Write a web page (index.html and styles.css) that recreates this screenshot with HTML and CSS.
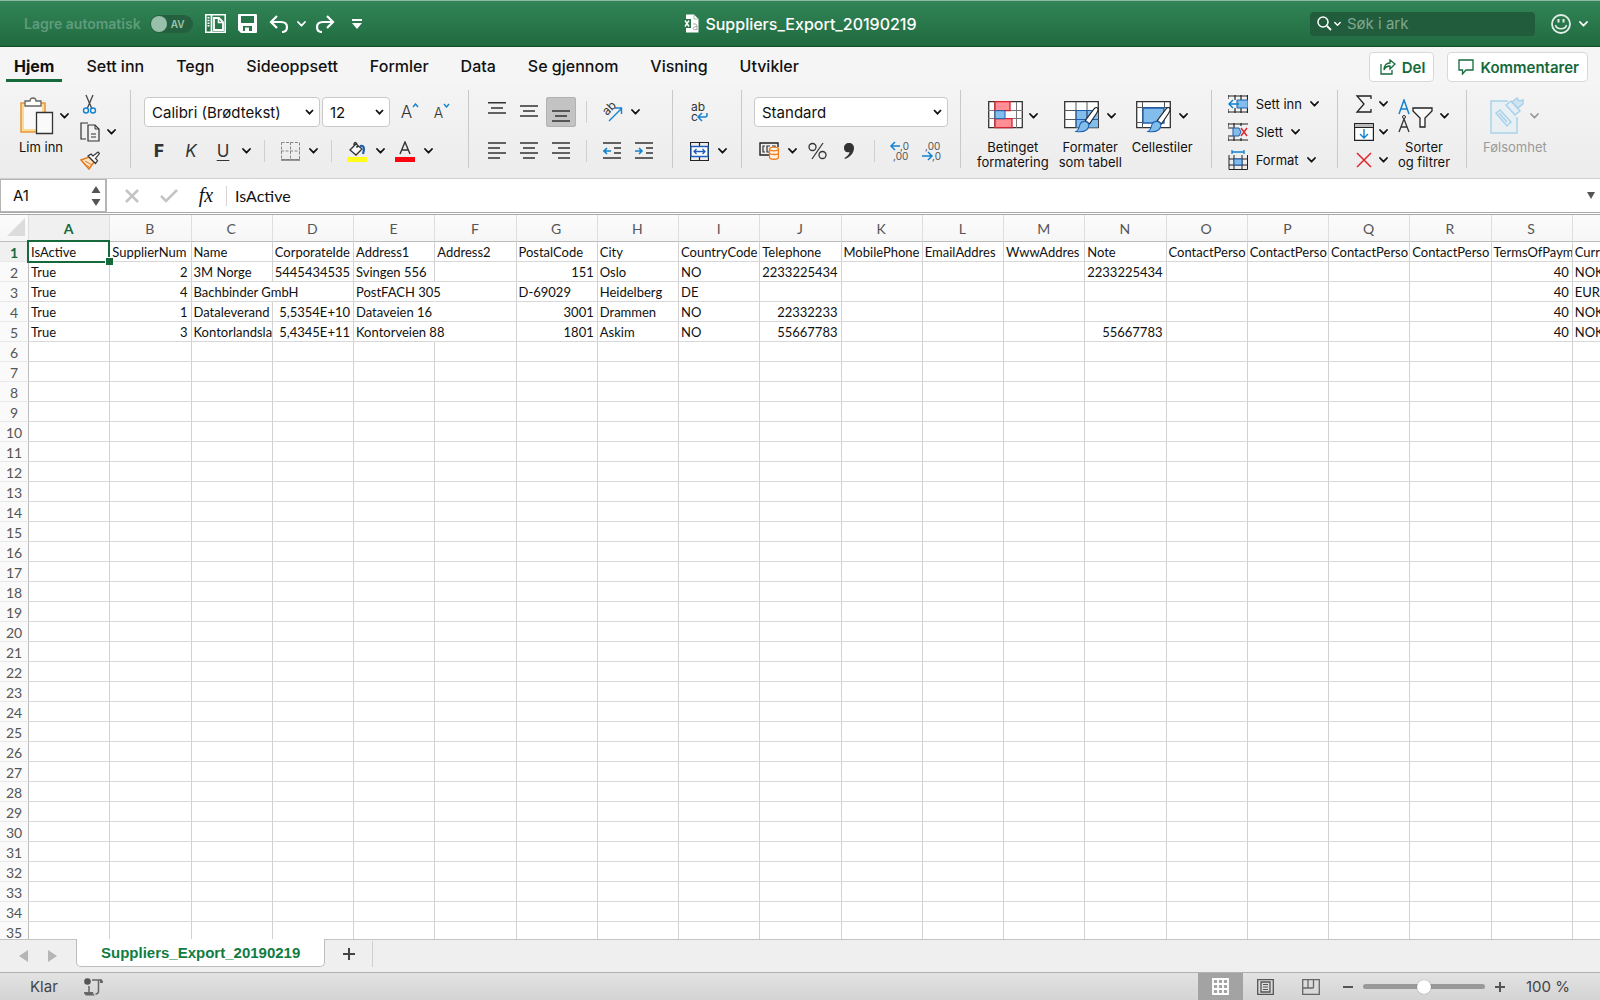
FILE: index.html
```html
<!DOCTYPE html>
<html lang="nb">
<head>
  <meta charset="UTF-8" />
  <meta name="viewport" content="width=device-width, initial-scale=1.0" />
  <title>Suppliers_Export_20190219</title>
  <link rel="stylesheet" href="styles.css">
</head>
<body>
  <!-- shared icons -->
  <svg class="defs" aria-hidden="true">
    <symbol id="chev" viewBox="0 0 9 6"><path d="M1 1l3.500 3.700L8 1" fill="none" stroke="currentColor" stroke-width="1.800" stroke-linecap="round" stroke-linejoin="round"/></symbol>
    <symbol id="brush" viewBox="0 0 28 32">
      <path d="M26 1c2 1 1 4-1 7l-8 12-5-4 9-12c2-3 4-4 5-3z" fill="#fff" stroke="#222" stroke-width="1.300"/>
      <path d="M11 17c3 0 6 3 5 6-1 5-7 7-15 6 4-2 3-5 5-9 1-2 3-3 5-3z" fill="#83bdec" stroke="#1d5fae" stroke-width="1.300"/>
    </symbol>
  </svg>

  <div class="app">
    <header class="titlebar">
      <div class="title-left">
        <label class="autosave" for="autosave">Lagre automatisk</label>
        <span class="toggle"><input type="checkbox" id="autosave" disabled><span>AV</span></span>
        <button class="tb-btn" aria-label="Ny fra mal">
          <svg width="21" height="19" viewBox="0 0 21 19"><path d="M.8 .8h19.400v17.400H.8z" fill="none" stroke="#fff" stroke-width="1.600"/><path d="M3.500 3v10" stroke="#fff" stroke-width="2" stroke-dasharray="1.500 1.200"/><path d="M6.500 1v17" stroke="#fff" stroke-width="1.800"/><path d="M9 4h5l4 4v8H9z" fill="none" stroke="#fff" stroke-width="1.800"/><path d="M13.500 4v4.500H18" fill="none" stroke="#fff" stroke-width="1.500"/></svg>
        </button>
        <button class="tb-btn" aria-label="Lagre">
          <svg width="19" height="19" viewBox="0 0 19 19"><path d="M1 0h17q1 0 1 1v17q0 1-1 1H3l-3-3V1q0-1 1-1z" fill="#fff"/><path d="M3 2h13v7H3zM5 12h9v5H5z" fill="#27754a"/><path d="M7 13.500h4V17H7z" fill="#fff"/></svg>
        </button>
        <button class="tb-btn undo" aria-label="Angre">
          <svg width="20" height="18" viewBox="0 0 20 18"><path d="M8 1L2 7l6 6M2 7h10c4 0 6 2 6 5s-2 5-5 5" class="wline"/></svg>
          <svg class="chev"><use href="#chev"/></svg>
        </button>
        <button class="tb-btn" aria-label="Gjør om">
          <svg width="20" height="18" viewBox="0 0 20 18"><path d="M12 1l6 6-6 6M18 7H8c-4 0-6 2-6 5s2 5 5 5" class="wline"/></svg>
        </button>
        <button class="tb-btn more" aria-label="Tilpass verktøylinje">
          <svg width="10" height="10" viewBox="0 0 10 10"><path d="M0 0h10v2H0zM0 4h10L5 10z" fill="#fff"/></svg>
        </button>
      </div>
      <h1 class="doc-title">
        <svg width="16" height="19" viewBox="0 0 16 19"><path d="M3 .5h8l4.500 4.500v13.500H3z" fill="#fff"/><path d="M11 .5V5h4.500" fill="none" stroke="#9dbfab"/><path d="M0 5h8v9H0z" fill="#27754a"/><path d="M2 6.500l4 6M6 6.500l-4 6" stroke="#fff" stroke-width="1.500"/><path d="M10 10q4-1 4 2v4M14 12.500q-4 0-4 2t4 1" fill="none" stroke="#aaa"/></svg>
        Suppliers_Export_20190219
      </h1>
      <div class="title-right">
        <div class="search">
          <svg width="15" height="15" viewBox="0 0 15 15"><circle cx="6" cy="6" r="5" fill="none" stroke="#fff" stroke-width="1.500"/><path d="M10 10l4 4" stroke="#fff" stroke-width="1.800"/></svg>
          <svg class="chev small"><use href="#chev"/></svg>
          <input type="text" placeholder="Søk i ark" aria-label="Søk i ark">
        </div>
        <button class="tb-btn smiley" aria-label="Tilbakemelding">
          <svg width="20" height="20" viewBox="0 0 20 20"><circle cx="10" cy="10" r="9" fill="none" stroke="#e2eee7" stroke-width="1.800"/><path d="M7.500 5v3.500M12.500 5v3.500" stroke="#e2eee7" stroke-width="2"/><path d="M4.500 11c1 5 10 5 11 0" fill="none" stroke="#e2eee7" stroke-width="1.500"/></svg>
          <svg class="chev"><use href="#chev"/></svg>
        </button>
      </div>
    </header>

    <nav class="tabs">
      <button class="tab active">Hjem</button>
      <button class="tab">Sett inn</button>
      <button class="tab">Tegn</button>
      <button class="tab">Sideoppsett</button>
      <button class="tab">Formler</button>
      <button class="tab">Data</button>
      <button class="tab">Se gjennom</button>
      <button class="tab">Visning</button>
      <button class="tab">Utvikler</button>
      <div class="tab-actions">
        <button class="outline-btn"><svg width="16" height="16" viewBox="0 0 16 16"><path d="M1 5v10h11v-4M10 1l5 4-5 5V7C7 7 5 8 4 11c0-4 2-7 6-7z" fill="none" stroke="#15693b" stroke-width="1.300"/></svg>Del</button>
        <button class="outline-btn"><svg width="16" height="16" viewBox="0 0 16 16"><path d="M1 1h14v10H8l-3.500 4v-4H1z" fill="none" stroke="#15693b" stroke-width="1.300"/></svg>Kommentarer</button>
      </div>
    </nav>

    <div class="ribbon">
      <section class="group clipboard">
        <button class="big">
          <span class="big-icon">
            <svg width="35" height="38" viewBox="0 0 35 38"><path d="M2 6h24v29H2z" fill="#fcdb93" stroke="#e8973c" stroke-width="1.500"/><path d="M5 9h18v23H5z" fill="#fafafa"/><path d="M6 9V4h5q0-3 3-3t3 3h5v5z" fill="#fff" stroke="#666" stroke-width="1.300"/><path d="M17.500 15.500h16v21h-16z" fill="#fafafa" stroke="#333" stroke-width="1.300"/></svg>
            <svg class="chev"><use href="#chev"/></svg>
          </span>
          Lim inn
        </button>
        <div class="stack">
          <button class="mini" aria-label="Klipp ut"><svg width="20" height="20" viewBox="0 0 20 20"><path d="M6 1l6 14M13 1L7 15" stroke="#444" stroke-width="1.300"/><circle cx="6" cy="16.500" r="2.500" fill="none" stroke="#1382d0" stroke-width="1.400"/><circle cx="13" cy="16.500" r="2.500" fill="none" stroke="#1382d0" stroke-width="1.400"/></svg></button>
          <button class="mini" aria-label="Kopier"><svg width="20" height="20" viewBox="0 0 20 20"><path d="M8 1H1v16h5M8 3h7l4 4v12H8z" fill="none" stroke="#333" stroke-width="1.200"/><path d="M15 3v4h4M11 12h5M11 15h5" fill="none" stroke="#333"/></svg><svg class="chev"><use href="#chev"/></svg></button>
          <button class="mini" aria-label="Kopier format"><svg width="20" height="19" viewBox="0 0 20 19"><path d="M1 9l8-3 5 5-5 7z" fill="#fde3c4" stroke="#e07b20" stroke-width="1.500"/><path d="M5 10l7 4M3 12l6 4" stroke="#e07b20"/><path d="M8 5l3-2 2 2 5-4 1.500 1.500-4 5 2 2-2 3z" fill="#fafafa" stroke="#333" stroke-width="1.200"/></svg></button>
        </div>
      </section>

      <section class="group font">
        <div class="row">
          <select class="font-name" aria-label="Skrift"><option>Calibri (Brødtekst)</option></select>
          <select class="font-size" aria-label="Skriftstørrelse"><option>12</option></select>
          <button class="cmd" aria-label="Øk skriftstørrelse"><span class="glyph">A</span><svg class="sup" width="7" height="5" viewBox="0 0 7 5"><path d="M1 4l2.500-3L6 4" fill="none" stroke="#1382d0" stroke-width="1.400"/></svg></button>
          <button class="cmd" aria-label="Reduser skriftstørrelse"><span class="glyph less">A</span><svg class="sup" width="7" height="5" viewBox="0 0 7 5"><path d="M1 1l2.500 3L6 1" fill="none" stroke="#1382d0" stroke-width="1.400"/></svg></button>
        </div>
        <div class="row">
          <button class="cmd bold">F</button>
          <button class="cmd italic">K</button>
          <span class="split"><button class="cmd underline">U</button><button class="drop" aria-label="Understreking"><svg class="chev"><use href="#chev"/></svg></button></span>
          <i class="sep"></i>
          <span class="split"><button class="cmd" aria-label="Kantlinjer"><svg width="19" height="19" viewBox="0 0 19 19"><path d="M.5 .5h18v17H.5zM9.500 0v17M0 9h19" fill="none" stroke="#888" stroke-dasharray="3 1.500"/><path d="M0 18h19" stroke="#777" stroke-width="1.500"/></svg></button><button class="drop" aria-label="Velg kantlinje"><svg class="chev"><use href="#chev"/></svg></button></span>
          <i class="sep"></i>
          <span class="split"><button class="cmd" aria-label="Fyllfarge"><svg width="20" height="21" viewBox="0 0 20 21"><path d="M9 3l6 5-6 6-6-5zM7 5V3q1-3 3 0v4" fill="#fafafa" stroke="#333" stroke-width="1.300"/><path d="M13 5c4-1 5 2 3 8" fill="none" stroke="#1d5fae" stroke-width="2.200"/><path d="M0 16h20v5H0z" fill="#ffff1a"/></svg></button><button class="drop" aria-label="Velg fyllfarge"><svg class="chev"><use href="#chev"/></svg></button></span>
          <span class="split"><button class="cmd" aria-label="Skriftfarge"><svg width="20" height="21" viewBox="0 0 20 21"><path d="M5 13l5-12 5 12M6.800 9h6.400" fill="none" stroke="#333" stroke-width="1.400"/><path d="M0 16h20v5H0z" fill="#fb0410"/></svg></button><button class="drop" aria-label="Velg skriftfarge"><svg class="chev"><use href="#chev"/></svg></button></span>
        </div>
      </section>

      <section class="group align">
        <div class="row">
          <button class="cmd" aria-label="Toppjuster"><svg class="lines" viewBox="0 0 18 20"><path d="M0 0.700h18M3 6h12M0 11h18"/></svg></button>
          <button class="cmd" aria-label="Midtjuster"><svg class="lines" viewBox="0 0 18 20"><path d="M0 4h18M3 9h12M0 14h18"/></svg></button>
          <button class="cmd pressed" aria-label="Bunnjuster"><svg class="lines" viewBox="0 0 18 20"><path d="M0 9h18M3 14h12M0 19h18"/></svg></button>
          <i class="sep"></i>
          <span class="split"><button class="cmd" aria-label="Retning"><svg class="loose" width="22" height="22" viewBox="0 0 22 22"><text transform="translate(6 15) rotate(-45)" class="ab">ab</text><path d="M8 20L20 8M14 7h6.500v6" fill="none" stroke="#1382d0" stroke-width="1.400"/></svg></button><button class="drop" aria-label="Velg retning"><svg class="chev"><use href="#chev"/></svg></button></span>
        </div>
        <div class="row">
          <button class="cmd" aria-label="Venstrejuster"><svg class="lines" viewBox="0 0 18 20"><path d="M0 2h18M0 7h12M0 12h18M0 17h12"/></svg></button>
          <button class="cmd" aria-label="Midtstill"><svg class="lines" viewBox="0 0 18 20"><path d="M0 2h18M3 7h12M0 12h18M3 17h12"/></svg></button>
          <button class="cmd" aria-label="Høyrejuster"><svg class="lines" viewBox="0 0 18 20"><path d="M0 2h18M6 7h12M0 12h18M6 17h12"/></svg></button>
          <i class="sep"></i>
          <button class="cmd" aria-label="Reduser innrykk"><svg class="lines" viewBox="0 0 18 20"><path d="M0 2h18M11 7h7M11 12h7M0 17h18"/><path class="blue" d="M8 10H1M4 7l-3 3 3 3"/></svg></button>
          <button class="cmd" aria-label="Øk innrykk"><svg class="lines" viewBox="0 0 18 20"><path d="M0 2h18M11 7h7M11 12h7M0 17h18"/><path class="blue" d="M0 10h7M4 7l3 3-3 3"/></svg></button>
        </div>
      </section>

      <section class="group narrow">
        <div class="row">
          <button class="cmd" aria-label="Bryt tekst"><svg class="loose" width="18" height="22" viewBox="0 0 18 22"><text x="1" y="10" class="ab">ab</text><text x="1" y="20" class="ab">c</text><path d="M17 12v2q0 2-2 2H9M12 12l-4 4 4 4" fill="none" stroke="#1382d0" stroke-width="1.500"/></svg></button>
        </div>
        <div class="row">
          <span class="split"><button class="cmd" aria-label="Slå sammen"><svg width="19" height="19" viewBox="0 0 19 19"><path d="M.5 .5h18v18H.5zM9.500 0v4M9.500 15v4" fill="none" stroke="#222" stroke-width="1.200"/><path d="M1 4.500h17v10H1z" fill="#fff" stroke="#1d5fbe" stroke-width="1.300"/><path d="M4 9.500h11M6.500 7L4 9.500 6.500 12M12.500 7L15 9.500 12.500 12" fill="none" stroke="#1d5fbe" stroke-width="1.300"/></svg></button><button class="drop" aria-label="Velg sammenslåing"><svg class="chev"><use href="#chev"/></svg></button></span>
        </div>
      </section>

      <section class="group">
        <div class="row">
          <select class="num-format" aria-label="Tallformat"><option>Standard</option></select>
        </div>
        <div class="row">
          <span class="split"><button class="cmd" aria-label="Valuta"><svg width="20" height="18" viewBox="0 0 20 18"><path d="M10 13H1V1h18v4" fill="none" stroke="#222" stroke-width="1.400"/><path d="M6 4H4v6h2M11 4H8v6h2M13 4h3v2" fill="none" stroke="#333" stroke-width="1.200"/><path d="M10.500 7v8c0 3 9 3 9 0V7" fill="#fff3e6" stroke="#ee7d1b" stroke-width="1.300"/><ellipse cx="15" cy="7" rx="4.500" ry="1.800" fill="#fff3e6" stroke="#ee7d1b" stroke-width="1.300"/><path d="M10.500 11c0 2 9 2 9 0" fill="none" stroke="#ee7d1b" stroke-width="1.300"/></svg></button><button class="drop" aria-label="Velg valuta"><svg class="chev"><use href="#chev"/></svg></button></span>
          <button class="cmd" aria-label="Prosent"><svg width="19" height="18" viewBox="0 0 19 18" fill="none" stroke="#333" stroke-width="1.300"><path d="M15 1L4 17"/><circle cx="4.500" cy="5" r="3.500"/><circle cx="14.500" cy="13" r="3.500"/></svg></button>
          <button class="cmd" aria-label="Tusenskille"><svg width="10" height="16" viewBox="0 0 10 16"><path d="M5 0c3 0 5 2 5 5 0 5-4 9-9 11l-.5-1c3-2 5-4 5-6C2 10 0 8 0 5s2-5 5-5z" fill="#333"/></svg></button>
          <i class="sep"></i>
          <button class="cmd" aria-label="Flere desimaler"><svg class="loose" width="20" height="20" viewBox="0 0 20 20"><path d="M10 5H1M5 1L1 5l4 4" fill="none" stroke="#1382d0" stroke-width="1.500"/><text x="10" y="9" class="dec">,0</text><text x="3" y="19" class="dec">,00</text></svg></button>
          <button class="cmd" aria-label="Færre desimaler"><svg class="loose" width="20" height="20" viewBox="0 0 20 20"><text x="3" y="9" class="dec">,00</text><text x="10" y="19" class="dec">,0</text><path d="M0 15h10M6 11l4 4-4 4" fill="none" stroke="#1382d0" stroke-width="1.500"/></svg></button>
        </div>
      </section>

      <section class="group styles">
        <button class="big center">
          <span class="big-icon">
            <svg width="35" height="32" viewBox="0 0 35 32"><path d="M.7 1.700h33.600v26H.7z" fill="#fff" stroke="#333" stroke-width="1.300"/><path d="M6.500 2v26M28.500 2v26M0 10.500h35M0 18.500h35" stroke="#777"/><path d="M7 1.700h15v9H7zM7 18.700h17v9H7z" fill="#ff8e95" stroke="#d8232f" stroke-width="1.300"/><path d="M7 10.700h10v8H7z" fill="#83bdec" stroke="#1d5fae"/></svg>
            <svg class="chev"><use href="#chev"/></svg>
          </span>
          Betinget<br>formatering
        </button>
        <button class="big center">
          <span class="big-icon">
            <svg width="37" height="36" viewBox="0 0 37 36"><path d="M.7 3.700h33.600v26H.7z" fill="#fff" stroke="#333" stroke-width="1.300"/><path d="M12 12.500h22v17H12z" fill="#83bdec"/><path d="M12 4v26M23 4v26M0 12.500h34M0 21.500h34" stroke="#555"/><path d="M12 12.500h22M12 12v17M12 21.500h22M23 12v17" stroke="#1d5fae"/><use href="#brush" x="9" y="9" width="28" height="27"/></svg>
            <svg class="chev"><use href="#chev"/></svg>
          </span>
          Formater<br>som tabell
        </button>
        <button class="big center">
          <span class="big-icon">
            <svg width="37" height="36" viewBox="0 0 37 36"><path d="M.7 3.700h33.600v26H.7z" fill="#fff" stroke="#333" stroke-width="1.300"/><path d="M6.500 4v26M28.500 4v6M0 9.500h34M0 24.500h7" stroke="#555"/><path d="M7 10h21v15H7z" fill="#83bdec" stroke="#1d5fae" stroke-width="1.300"/><use href="#brush" x="9" y="9" width="28" height="27"/></svg>
            <svg class="chev"><use href="#chev"/></svg>
          </span>
          Cellestiler
        </button>
      </section>

      <section class="group cells">
        <div class="stack">
          <button class="mini"><svg width="20" height="18" viewBox="0 0 20 18"><path d="M0 1h20M0 17h20M19.500 0v18M7 0v5M13 0v18M7 13v5M0 0v4M0 14v4" stroke="#222" stroke-width="1.200"/><path d="M9 5h11v8H9z" fill="#83bdec" stroke="#1d5fae"/><path d="M11 9H1M5 5L1 9l4 4" fill="none" stroke="#1382d0" stroke-width="1.500"/></svg>Sett inn<svg class="chev"><use href="#chev"/></svg></button>
          <button class="mini"><svg width="20" height="18" viewBox="0 0 20 18"><path d="M0 1h20M0 17h20M6 0v5M13 0v3M6 13v5M13 15v3M0 0v4M0 14v4M0 5h5M0 13h5" stroke="#222" stroke-width="1.200"/><path d="M5 5h6l2 4-2 4H5z" fill="#83bdec" stroke="#1d5fae"/><path d="M13 5l6 8M19 5l-6 8" stroke="#e2262e" stroke-width="1.500"/></svg>Slett<svg class="chev"><use href="#chev"/></svg></button>
          <button class="mini"><svg width="20" height="20" viewBox="0 0 20 20"><path d="M1 5v14.500h18.500V5M1 9h19M1 15h19M6 5v15M14 5v15" fill="none" stroke="#222"/><path d="M6 9h8v6H6z" fill="#83bdec" stroke="#1d5fae"/><path d="M4 2h12M4 0v4M16 0v4" stroke="#1382d0" stroke-width="1.300"/></svg>Format<svg class="chev"><use href="#chev"/></svg></button>
        </div>
      </section>

      <section class="group editing">
        <div class="stack">
          <button class="mini" aria-label="Autosummer"><svg width="20" height="18" viewBox="0 0 20 18"><path d="M17 4V1H3l7 8-7 8h14v-3" fill="none" stroke="#222" stroke-width="1.300"/></svg><svg class="chev"><use href="#chev"/></svg></button>
          <button class="mini" aria-label="Fyll"><svg width="20" height="18" viewBox="0 0 20 18"><path d="M.6 .6h18.800v16.800H.6z" fill="#fff" stroke="#222" stroke-width="1.200"/><path d="M1 1h18v3H1z" fill="#bbb"/><path d="M0 4.500h20" stroke="#222"/><path d="M10 6v9M6 11l4 4 4-4" fill="none" stroke="#1382d0" stroke-width="1.400"/></svg><svg class="chev"><use href="#chev"/></svg></button>
          <button class="mini" aria-label="Fjern"><svg width="20" height="18" viewBox="0 0 20 18"><path d="M3 2l14 14M17 2L3 16" stroke="#e2262e" stroke-width="1.500"/></svg><svg class="chev"><use href="#chev"/></svg></button>
        </div>
        <button class="big center">
          <span class="big-icon">
            <svg width="36" height="34" viewBox="0 0 36 34"><path d="M1 15L6 1l5 14M3 10h6" fill="none" stroke="#1382d0" stroke-width="1.500"/><path d="M1 33l5-13 5 13M3 28h6" fill="none" stroke="#333" stroke-width="1.300"/><circle cx="6" cy="18" r="1.500" fill="none" stroke="#333"/><path d="M15 9h19v3l-7 7v9h-5v-9l-7-7z" fill="#fafafa" stroke="#222" stroke-width="1.300"/></svg>
            <svg class="chev"><use href="#chev"/></svg>
          </span>
          Sorter<br>og filtrer
        </button>
      </section>

      <section class="group last">
        <button class="big center" disabled>
          <span class="big-icon">
            <svg width="34" height="38" viewBox="0 0 34 38"><path d="M18 4H1v32h26V20" fill="#e9f0f4" stroke="#a9d2ea" stroke-width="1.500"/><path d="M6 16l4-3 11 12-4 4zM9 16l8 9" fill="#e4eef4" stroke="#a9d2ea" stroke-width="1.500"/><path d="M16 8l5-4 9 10-5 4z" fill="#e4eef4" stroke="#a9d2ea" stroke-width="1.500"/><path d="M22 5l5-4 2 3 4-1v4l-5 4z" fill="#cfe4f0" stroke="#a9d2ea" stroke-width="1.500"/></svg>
            <svg class="chev"><use href="#chev"/></svg>
          </span>
          Følsomhet
        </button>
      </section>
    </div>

    <div class="formula-bar">
      <div class="name-box">
        <input type="text" value="A1" aria-label="Navneboks">
        <svg width="10" height="22" viewBox="0 0 10 22"><path d="M5 1l4.500 7h-9zM5 21l4.500-7h-9z" fill="#555"/></svg>
      </div>
      <button class="fx-btn" aria-label="Avbryt" disabled><svg width="14" height="14" viewBox="0 0 14 14"><path d="M1 1l12 12M13 1L1 13" stroke="#c4c4c4" stroke-width="2.500"/></svg></button>
      <button class="fx-btn" aria-label="Skriv inn" disabled><svg width="18" height="14" viewBox="0 0 18 14"><path d="M1 7l5 5L17 1" fill="none" stroke="#c4c4c4" stroke-width="2.500"/></svg></button>
      <button class="fx-btn fx" aria-label="Sett inn funksjon">fx</button>
      <input class="formula" type="text" value="IsActive" aria-label="Formellinje">
      <button class="expand" aria-label="Utvid formellinje"><svg width="8" height="7" viewBox="0 0 8 7"><path d="M0 0h8L4 7z" fill="#555"/></svg></button>
    </div>

    <main class="grid-wrap">
      <table class="grid">
        <thead><tr id="letters"></tr></thead>
        <tbody id="rows"></tbody>
      </table>
    </main>

    <div class="sheets">
      <button class="nav" aria-label="Forrige ark"><svg width="9" height="12" viewBox="0 0 9 12"><path d="M9 0v12L0 6z" fill="#b5b5b5"/></svg></button>
      <button class="nav" aria-label="Neste ark"><svg width="9" height="12" viewBox="0 0 9 12"><path d="M0 0v12l9-6z" fill="#b5b5b5"/></svg></button>
      <button class="sheet">Suppliers_Export_20190219</button>
      <button class="add" aria-label="Nytt ark"><svg width="12" height="12" viewBox="0 0 12 12"><path d="M6 0v12M0 6h12" stroke="#444" stroke-width="2"/></svg></button>
    </div>

    <footer class="status">
      <span class="ready">Klar</span>
      <button class="macro" aria-label="Spill inn makro"><svg width="19" height="18" viewBox="0 0 19 18"><circle cx="3.500" cy="3.500" r="3.300" fill="#555"/><path d="M8 2h9M14.500 2v11q0 3-3 3M5 8v7" fill="none" stroke="#666" stroke-width="1.500"/><path d="M16 1q3 0 3 4h-3zM0 14h9q0 2 2 3.500H2Q0 17 0 14z" fill="#666"/></svg></button>
      <div class="views">
        <button class="view on" aria-label="Normal"><svg width="17" height="17" viewBox="0 0 17 17"><path d="M1 1h15v15H1zM1 6h15M1 11h15M6 1v15M11 1v15" fill="none" stroke="#fff" stroke-width="1.800"/></svg></button>
        <button class="view" aria-label="Sideoppsett"><svg width="17" height="16" viewBox="0 0 17 16"><path d="M.7 .7h15.600v14.600H.7zM4 3h9v10H4z" fill="none" stroke="#555" stroke-width="1.300"/><path d="M6 5.500h5M6 8h5M6 10.500h5" stroke="#555"/></svg></button>
        <button class="view" aria-label="Sideskift"><svg width="18" height="16" viewBox="0 0 18 16"><path d="M.7 .7h16.600v14.600H.7zM6 1v8M11.500 1v8M1 9h10.500" fill="none" stroke="#666" stroke-width="1.300"/></svg></button>
      </div>
      <button class="zoom-btn" aria-label="Zoom ut"><svg width="10" height="10" viewBox="0 0 10 10"><path d="M0 5h10" stroke="#555" stroke-width="2"/></svg></button>
      <input class="zoom" type="range" min="0" max="200" value="100" aria-label="Zoom">
      <button class="zoom-btn" aria-label="Zoom inn"><svg width="10" height="10" viewBox="0 0 10 10"><path d="M0 5h10M5 0v10" stroke="#555" stroke-width="2"/></svg></button>
      <span class="percent">100 %</span>
    </footer>
  </div>
  <script src="script.js"></script>
</body>
</html>
```
FILE: styles.css
```css
* {
  box-sizing: border-box;
}

body {
  margin: 0;
  font-family: Inter, "Liberation Sans", sans-serif;
  color: #111;
  overflow: hidden;
}

button, input, select {
  font: inherit;
  color: inherit;
  margin: 0;
}

button {
  display: flex;
  align-items: center;
  padding: 0;
  border: none;
  background: none;
  white-space: nowrap;
}

svg {
  display: block;
  flex: none;
}

.defs {
  display: none;
}

.loose {
  overflow: visible;
}

.chev {
  width: 9px;
  height: 6px;
}

.app {
  display: flex;
  flex-direction: column;
  height: 100vh;
}

/* title bar */
.titlebar {
  display: grid;
  grid-template-columns: 1fr auto 1fr;
  align-items: center;
  height: 47px;
  flex: none;
  background: linear-gradient(#318557, #216a40);
  border-top: 1px solid #8fb8a2;
  border-bottom: 1px solid #0f5126;
  color: #fff;
}

.title-left {
  display: flex;
  align-items: center;
  gap: 12px;
  padding-left: 24px;
}

.autosave {
  font-size: 14px;
  font-weight: 600;
  color: #5f9c7b;
}

.toggle {
  display: flex;
  align-items: center;
  gap: 4px;
  width: 43px;
  height: 18px;
  margin-left: -3px;
  padding-left: 1px;
  border-radius: 9px;
  background: #24603f;
  font-size: 10px;
  font-weight: 600;
  color: #9fc4af;
}

.toggle input {
  appearance: none;
  width: 16px;
  height: 16px;
  border-radius: 50%;
  background: #98bfaa;
}

.tb-btn {
  gap: 8px;
}

.undo {
  margin-right: -3px;
}

.more {
  margin-left: 5px;
}

.wline {
  fill: none;
  stroke: #fff;
  stroke-width: 2.2;
}

.doc-title {
  display: flex;
  align-items: center;
  gap: 6px;
  margin: 0;
  font-size: 16px;
  font-weight: 500;
}

.title-right {
  display: flex;
  align-items: center;
  justify-content: flex-end;
  gap: 16px;
  padding-right: 12px;
}

.search {
  display: flex;
  align-items: center;
  gap: 2px;
  width: 225px;
  height: 24px;
  padding-left: 7px;
  border-radius: 4px;
  background: #215c3c;
  font-size: 15px;
}

.search input {
  flex: 1;
  min-width: 0;
  padding: 0 0 0 4px;
  border: none;
  background: none;
}

.search input::placeholder {
  color: #7fa890;
  opacity: 1;
}

.small {
  width: 7px;
}

/* ribbon tabs */
.tabs {
  display: flex;
  align-items: center;
  gap: 16px;
  height: 38px;
  flex: none;
  padding: 2px 12px 0 6px;
  background: #f5f5f5;
  font-size: 16px;
  font-weight: 500;
}

.tab {
  height: 30px;
  padding: 0 8px;
  border-bottom: 3px solid transparent;
}

.tab.active {
  font-weight: 700;
  border-color: #15693b;
}

.tab-actions {
  display: flex;
  gap: 13px;
  margin-left: auto;
}

.outline-btn {
  gap: 6px;
  height: 30px;
  padding: 0 8px 0 10px;
  border: 1px solid #d8d8d8;
  border-radius: 4px;
  background: #fff;
  color: #15693b;
  font-size: 15px;
  font-weight: 600;
}

/* ribbon */
.ribbon {
  display: flex;
  flex: none;
  height: 94px;
  padding: 5px 0 10px;
  background: linear-gradient(#f4f4f4, #ececec);
  border-bottom: 1px solid #cfcfcf;
  font-size: 13px;
}

.group {
  display: flex;
  flex-direction: column;
  gap: 9px;
  padding: 7px 12px 0;
  border-right: 1px solid #c9c9c9;
}

.group.narrow {
  padding: 7px 11px 0;
}

.group.font {
  padding: 7px 11px 0 13px;
}

.group.align {
  padding: 7px 13px 0;
}

.group.clipboard,
.group.styles,
.group.cells,
.group.editing,
.group.last {
  flex-direction: row;
  align-items: flex-start;
  padding: 0 16px;
}

.group.clipboard {
  gap: 11px;
  padding: 0 14px 0 19px;
}

.group.styles {
  gap: 10px;
  padding-right: 18px;
}

.group.cells {
  padding-right: 18px;
}

.group.editing {
  gap: 10px;
}

.group.last {
  border-right: none;
}

.row {
  display: flex;
  align-items: center;
  gap: 2px;
  height: 30px;
}

.split {
  display: flex;
}

.cmd {
  justify-content: center;
  width: 30px;
  height: 30px;
  color: #333;
}

.drop {
  justify-content: center;
  width: 16px;
}

.pressed {
  background: #c3c3c3;
  border-radius: 3px;
  box-shadow: inset 0 0 0 1px #b2b2b2;
}

.sep {
  width: 1px;
  height: 22px;
  margin: 0 8px;
  background: #cfcfcf;
}

.glyph {
  font-size: 17px;
  font-weight: 300;
}

.less {
  font-size: 14px;
}

.sup {
  align-self: flex-start;
  margin-top: 6px;
}

.bold {
  font-size: 17px;
  font-weight: 800;
}

.italic {
  font-size: 17px;
  font-style: italic;
}

.underline {
  font-size: 17px;
  text-decoration: underline;
  text-underline-offset: 3px;
}

.lines {
  width: 18px;
  height: 20px;
  fill: none;
  stroke: #333;
  stroke-width: 1.4;
}

.lines .blue {
  stroke: #1382d0;
  stroke-width: 1.6;
}

.ab {
  font-size: 12px;
  fill: #333;
}

.dec {
  font-size: 10px;
  fill: #555;
}

select {
  appearance: none;
  height: 30px;
  padding: 0 7px;
  border: 1px solid #c9c9c9;
  border-radius: 4px;
  background: #fff url("data:image/svg+xml,%3Csvg xmlns='http://www.w3.org/2000/svg' width='9' height='6'%3E%3Cpath d='M1 1l3.500 3.700L8 1' fill='none' stroke='%23111' stroke-width='1.800'/%3E%3C/svg%3E") no-repeat right 5px center;
  font-size: 15px;
}

.font-name {
  width: 176px;
}

.font-size {
  width: 68px;
  margin-right: 3px;
}

.num-format {
  width: 194px;
}

.big {
  flex-direction: column;
  align-items: flex-start;
  gap: 4px;
  padding-top: 6px;
  line-height: 15px;
}

.big-icon {
  display: flex;
  align-items: center;
  gap: 6px;
  height: 40px;
}

.big.center {
  display: block;
  text-align: center;
}

.center .big-icon {
  justify-content: center;
  margin-bottom: 4px;
}

.big:disabled {
  color: #9a9a9a;
}

.stack {
  display: flex;
  flex-direction: column;
  gap: 8px;
  padding-top: 4px;
}

.mini {
  gap: 7px;
  height: 20px;
}

.cells .mini {
  gap: 8px;
}

.editing .mini {
  gap: 5px;
}

/* formula bar */
.formula-bar {
  display: flex;
  align-items: center;
  flex: none;
  height: 36px;
  background: #fff;
  border-bottom: 3px double #aaa;
  font-size: 16px;
}

.name-box {
  display: flex;
  align-items: center;
  align-self: stretch;
  width: 107px;
  margin-right: 12px;
  padding: 0 4px 0 12px;
  border: 1px solid #b5b5b5;
  border-right-width: 2px;
  font-size: 15px;
}

.name-box input {
  flex: 1;
  min-width: 0;
  padding: 0;
  border: none;
}

.fx-btn {
  justify-content: center;
  width: 26px;
  height: 22px;
  margin-right: 11px;
}

.fx {
  margin-right: 7px;
  font-family: "Liberation Serif", serif;
  font-size: 20px;
  font-style: italic;
}

.formula {
  flex: 1;
  height: 20px;
  padding: 0 8px;
  border: none;
  border-left: 1px solid #d5d5d5;
  font-family: Lato, sans-serif;
}

.expand {
  margin-right: 5px;
}

/* grid */
.grid-wrap {
  flex: 1;
  min-height: 0;
  overflow: hidden;
  background: #fff;
}

.grid {
  width: 1654px;
  table-layout: fixed;
  border-collapse: separate;
  border-spacing: 0;
  font-family: Lato, "Liberation Sans", sans-serif;
  font-size: 13px;
}

.grid th,
.grid td {
  height: 20px;
  padding: 2px 3px 0 2px;
  border-right: 1px solid #d2d2d2;
  border-bottom: 1px solid #d8d8d8;
  line-height: 17px;
  white-space: nowrap;
  overflow: hidden;
}

.grid th {
  background: #fafafa;
  color: #555;
  font-weight: 400;
  text-align: center;
}

.grid thead th {
  height: 27px;
  padding-top: 0;
  background: linear-gradient(#fcfcfc, #f6f6f6);
  border-right-color: #dedede;
  border-bottom-color: #bdbdbd;
  font-size: 14px;
}

.grid .corner {
  width: 29px;
  padding: 0 3px 3px;
}

.corner svg {
  margin-left: auto;
}

.grid tbody th {
  padding: 2px 0 0;
  border-right-color: #bdbdbd;
  border-bottom-color: #e8e8e8;
  font-size: 14px;
}

.grid th.current {
  background: #f0f0f0;
  color: #15693b;
  font-weight: 700;
}

.grid td.num {
  text-align: right;
}

.grid td.spill {
  overflow: visible;
  border-right-color: transparent;
}

.grid td.selected {
  position: relative;
  overflow: visible;
}

/* selection frame with fill handle */
.selected::before {
  content: "";
  position: absolute;
  inset: -2px -1px -2px -2px;
  border: 2px solid #15693b;
}

.selected::after {
  content: "";
  position: absolute;
  right: -4px;
  bottom: -4px;
  width: 7px;
  height: 7px;
  background: #15693b;
  border: 1px solid #fff;
  border-width: 1px 0 0 1px;
}

/* sheet tabs */
.sheets {
  display: flex;
  flex: none;
  height: 33px;
  background: #efefef;
  border-top: 1px solid #c4c4c4;
}

.nav {
  justify-content: center;
  width: 29px;
}

.nav:first-child {
  margin-left: 9px;
}

.sheet {
  height: 28px;
  margin: -1px 0 0 9px;
  padding: 0 24px;
  border: 1px solid #bdbdbd;
  border-top: none;
  border-radius: 0 0 5px 5px;
  background: #fff;
  color: #107c41;
  font-family: "Liberation Sans", sans-serif;
  font-size: 15px;
  font-weight: 700;
}

.add {
  justify-content: center;
  width: 48px;
  height: 26px;
  margin-top: 1px;
  border-right: 1px solid #cfcfcf;
}

/* status bar */
.status {
  display: flex;
  align-items: center;
  flex: none;
  height: 28px;
  padding: 0 30px;
  background: linear-gradient(#e2e2e2, #d4d4d4);
  border-top: 1px solid #b0b0b0;
  color: #444;
  font-size: 15px;
}

.macro {
  margin-left: 26px;
}

.views {
  display: flex;
  align-self: stretch;
  margin-left: auto;
}

.view {
  justify-content: center;
  width: 45px;
}

.view.on {
  background: #a3a3a3;
}

.zoom-btn {
  margin: 0 10px;
}

.zoom {
  appearance: none;
  width: 122px;
  height: 5px;
  border-radius: 3px;
  background: #999;
}

.zoom::-webkit-slider-thumb {
  appearance: none;
  width: 14px;
  height: 14px;
  border-radius: 50%;
  background: #fff;
  box-shadow: 0 0 1px #777;
}

.percent {
  margin-left: 11px;
}
```
FILE: script.js
```js
const letters = 'ABCDEFGHIJKLMNOPQRST'.split('');
const rowCount = 35;

const data = [
  ['IsActive', 'SupplierNum', 'Name', 'CorporateIde', 'Address1', 'Address2', 'PostalCode', 'City', 'CountryCode', 'Telephone', 'MobilePhone', 'EmailAddres', 'WwwAddres', 'Note', 'ContactPerso', 'ContactPerso', 'ContactPerso', 'ContactPerso', 'TermsOfPaym', 'Curr'],
  ['True', 2, '3M Norge', 5445434535, 'Svingen 556', '', 151, 'Oslo', 'NO', 2233225434, '', '', '', 2233225434, '', '', '', '', 40, 'NOK'],
  ['True', 4, 'Bachbinder GmbH', '', 'PostFACH 305', '', 'D-69029', 'Heidelberg', 'DE', '', '', '', '', '', '', '', '', '', 40, 'EUR'],
  ['True', 1, 'Dataleverand', '5,5354E+10', 'Dataveien 16', '', 3001, 'Drammen', 'NO', 22332233, '', '', '', '', '', '', '', '', 40, 'NOK'],
  ['True', 3, 'Kontorlandsla', '5,4345E+11', 'Kontorveien 88', '', 1801, 'Askim', 'NO', 55667783, '', '', '', 55667783, '', '', '', '', 40, 'NOK']
];

// cells whose text runs over into the empty neighbour
const spill = ['C3', 'E3', 'E4', 'E5'];

const head = document.getElementById('letters');
head.innerHTML = '<th class="corner"><svg width="18" height="18" viewBox="0 0 18 18"><path d="M18 0v18H0z" fill="#dcdcdc"/></svg></th>' +
  letters.map(l => `<th class="${l === 'A' ? 'current' : ''}">${l}</th>`).join('');

let html = '';
for (let r = 1; r <= rowCount; r++) {
  html += `<tr><th class="${r === 1 ? 'current' : ''}">${r}</th>`;
  letters.forEach((l, c) => {
    const value = data[r - 1] ? data[r - 1][c] : '';
    const classes = [];
    if (typeof value === 'number' || /E\+/.test(value)) classes.push('num');
    if (spill.includes(l + r)) classes.push('spill');
    if (l + r === 'A1') classes.push('selected');
    html += `<td class="${classes.join(' ')}">${value}</td>`;
  });
  html += '</tr>';
}
document.getElementById('rows').innerHTML = html;
```
